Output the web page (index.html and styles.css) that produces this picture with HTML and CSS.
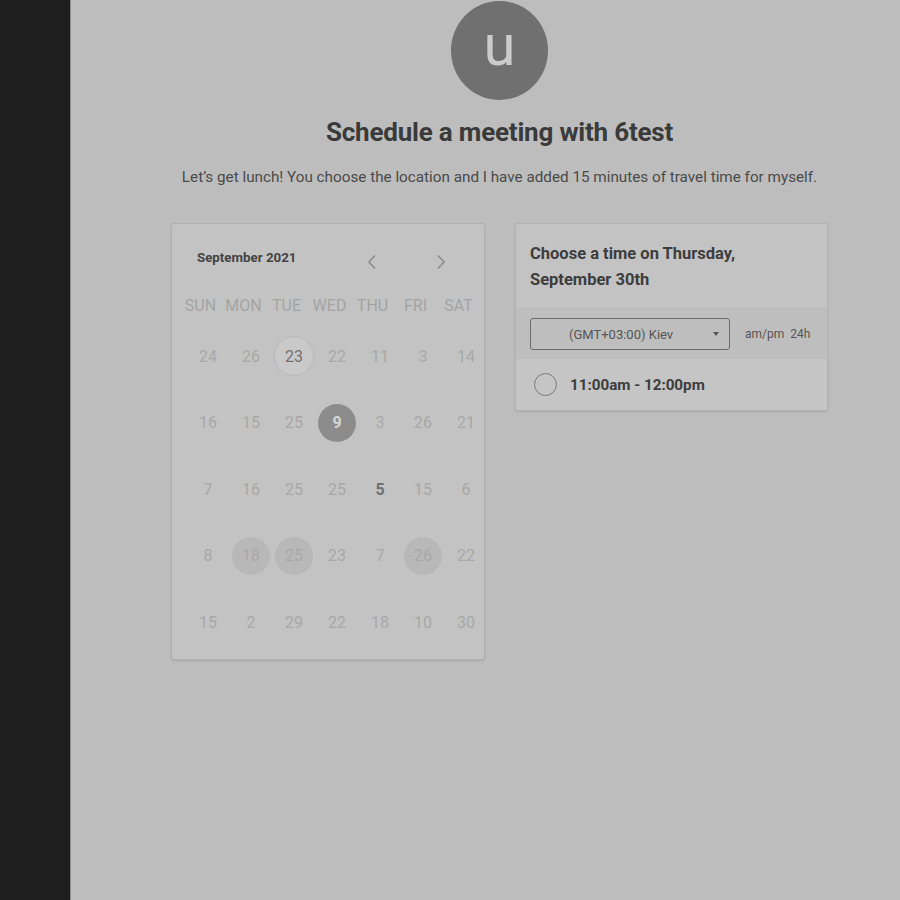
FILE: index.html
```html
<!DOCTYPE html>
<html lang="en">
<head>
<meta charset="utf-8">
<title>Schedule a meeting with 6test</title>
<link rel="stylesheet" href="styles.css">
</head>
<body>
<div class="app">
  <aside class="sidebar"></aside>
  <main class="main">
    <div class="avatar"><span>u</span></div>
    <h1 class="title">Schedule a meeting with 6test</h1>
    <p class="subtitle">Let’s get lunch! You choose the location and I have added 15 minutes of travel time for myself.</p>
    <div class="cards">
      <section class="calendar">
        <div class="cal-head">
          <div class="cal-month">September 2021</div>
          <div class="cal-nav">
            <span class="nav-btn"><svg width="10" height="16" viewBox="0 0 10 16"><path d="M8 1.5 L2 8 L8 14.5" fill="none" stroke="#8c8c8c" stroke-width="1.6"/></svg></span>
            <span class="nav-btn"><svg width="10" height="16" viewBox="0 0 10 16"><path d="M2 1.5 L8 8 L2 14.5" fill="none" stroke="#8c8c8c" stroke-width="1.6"/></svg></span>
          </div>
        </div>
        <div class="dow">
          <span>SUN</span><span>MON</span><span>TUE</span><span>WED</span><span>THU</span><span>FRI</span><span>SAT</span>
        </div>
        <div class="days">
          <span>24</span><span>26</span><span class="d-today">23</span><span>22</span><span>11</span><span>3</span><span>14</span>
          <span>16</span><span>15</span><span>25</span><span class="d-sel">9</span><span>3</span><span>26</span><span>21</span>
          <span>7</span><span>16</span><span>25</span><span>25</span><span class="d-bold">5</span><span>15</span><span>6</span>
          <span>8</span><span class="d-avail">18</span><span class="d-avail">25</span><span>23</span><span>7</span><span class="d-avail">26</span><span>22</span>
          <span>15</span><span>2</span><span>29</span><span>22</span><span>18</span><span>10</span><span>30</span>
        </div>
      </section>
      <section class="times">
        <div class="times-head">Choose a time on Thursday,<br>September 30th</div>
        <div class="times-bar">
          <div class="tz-select"><span class="tz-text">(GMT+03:00) Kiev</span><span class="caret"></span></div>
          <div class="fmt"><span>am/pm</span><span>24h</span></div>
        </div>
        <div class="slot">
          <span class="radio"></span>
          <span class="slot-text">11:00am - 12:00pm</span>
        </div>
      </section>
    </div>
  </main>
</div>
</body>
</html>
```
FILE: styles.css
```css
* { box-sizing: border-box; }
html, body { margin: 0; padding: 0; }
body {
  font-family: Roboto, "Liberation Sans", Arial, sans-serif;
  background: #bdbdbd;
  color: #3b3b3b;
}
.app {
  display: flex;
  min-height: 900px;
}
.sidebar {
  width: 71px;
  flex: 0 0 71px;
  background: #1e1e1e;
  border-right: 1px solid #8c8c8c;
}
.main {
  flex: 1;
  display: flex;
  flex-direction: column;
  align-items: center;
  padding-left: 28px;
}
.avatar {
  width: 97px;
  height: 99px;
  margin-top: 1px;
  border-radius: 50%;
  background: #707070;
  display: flex;
  align-items: center;
  justify-content: center;
}
.avatar span {
  color: #cbcbcb;
  font-size: 58px;
  line-height: 1;
  margin-top: -12px;
}
.title {
  margin: 16px 0 0;
  font-size: 26px;
  line-height: 32px;
  font-weight: 700;
  letter-spacing: -0.2px;
  color: #3a3a3a;
}
.subtitle {
  margin: 19px 0 0;
  font-size: 15.25px;
  line-height: 20px;
  color: #4a4a4a;
}
.cards {
  margin-top: 36px;
  display: flex;
  gap: 30px;
  align-items: flex-start;
}
.calendar {
  width: 314px;
  height: 437px;
  background: #c3c3c3;
  border: 1px solid #b0b0b0;
  border-radius: 3px;
  box-shadow: 0 1px 2px rgba(0,0,0,0.12);
}
.cal-head {
  display: flex;
  align-items: center;
  height: 34px;
  margin-top: 16px;
  padding: 0 28px 0 25px;
}
.cal-month {
  flex: 1;
  font-size: 13.3px;
  font-weight: 700;
  color: #444;
}
.cal-nav {
  display: flex;
  gap: 39px;
  margin-top: 10px;
}
.nav-btn {
  width: 30px;
  display: flex;
  justify-content: center;
}
.dow {
  display: grid;
  grid-template-columns: repeat(7, 43px);
  height: 30px;
  margin-top: 16px;
  padding-left: 7px;
  align-items: center;
  font-size: 16px;
  color: #a3a3a3;
}
.dow span { text-align: center; }
.days {
  display: grid;
  grid-template-columns: repeat(7, 43px);
  grid-auto-rows: 66.5px;
  margin-top: 3px;
  padding-left: 14.5px;
  font-size: 16px;
  color: #a8a8a8;
}
.days span {
  display: flex;
  align-items: center;
  justify-content: center;
  position: relative;
}
.days .d-today, .days .d-sel, .days .d-avail { isolation: isolate; }
.days .d-today::before,
.days .d-sel::before,
.days .d-avail::before {
  content: "";
  position: absolute;
  width: 38px;
  height: 38px;
  border-radius: 50%;
  left: 50%;
  top: 50%;
  transform: translate(-50%, -50%);
  z-index: -1;
}
.days .d-today { color: #727272; }
.days .d-today::before { background: #c9c9c9; border: 1px solid #bababa; }
.days .d-sel { color: #d6d6d6; font-weight: 700; }
.days .d-sel::before { background: #8c8c8c; }
.days .d-avail::before { background: #b8b8b8; }
.days .d-bold { color: #707070; font-weight: 700; }

.times {
  width: 313px;
  background: #c4c4c4;
  border: 1px solid #b3b3b3;
  border-radius: 2px;
  box-shadow: 0 1px 2px rgba(0,0,0,0.12);
}
.times-head {
  padding: 17px 14px 15px;
  font-size: 16.5px;
  line-height: 26px;
  font-weight: 700;
  color: #3d3d3d;
  background: #c3c3c3;
  border-bottom: 1px solid #b9b9b9;
}
.times-bar {
  height: 50px;
  display: flex;
  align-items: center;
  padding: 0 14px;
  background: #bebebe;
}
.tz-select {
  width: 200px;
  height: 32px;
  border: 1px solid #6b6b6b;
  border-radius: 3px;
  display: flex;
  align-items: center;
  padding-left: 38px;
  padding-right: 10px;
  font-size: 13px;
  color: #555;
}
.tz-text { flex: 1; }
.caret {
  width: 0;
  height: 0;
  border-left: 3.5px solid transparent;
  border-right: 3.5px solid transparent;
  border-top: 4px solid #555;
}
.fmt {
  margin-left: 15px;
  font-size: 12px;
  color: #555;
  display: flex;
  gap: 6px;
}
.slot {
  height: 51px;
  display: flex;
  align-items: center;
  padding-left: 18px;
  background: #c5c5c5;
}
.radio {
  width: 23px;
  height: 23px;
  border-radius: 50%;
  border: 1.5px solid #777;
}
.slot-text {
  margin-left: 13px;
  font-size: 15.2px;
  font-weight: 700;
  color: #3d3d3d;
}
```
